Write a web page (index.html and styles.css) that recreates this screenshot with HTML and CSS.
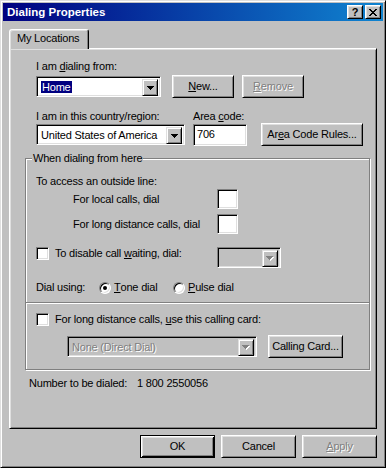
FILE: index.html
```html
<!DOCTYPE html>
<html lang="en">
<head>
  <meta charset="UTF-8">
  <title>Dialing Properties</title>
  <link rel="stylesheet" href="styles.css">
</head>
<body>
  <div class="window">
    <div class="titlebar">
      <span class="title">Dialing Properties</span>
      <div class="title-buttons">
        <button class="tbtn">?</button>
        <button class="tbtn">
          <svg width="8" height="7" viewBox="0 0 8 7"><path d="M0 0h2v1h1v1h2V1h1V0h2v1H7v1H6v1H5v1h1v1h1v1h1v1H6V6H5V5H3v1H2v1H0V6h1V5h1V4h1V3H2V2H1V1H0z" fill="#000"/></svg>
        </button>
      </div>
    </div>

    <div class="content">
      <div class="tabs">
        <div class="tab">My Locations</div>
      </div>

      <div class="panel">
        <div class="top">
          <div class="lbl">I am <u>d</u>ialing from:</div>
          <div class="row first">
            <div class="combo w-home">
              <span class="value"><span class="sel">Home</span></span>
              <span class="arrow"><svg width="7" height="4" viewBox="0 0 7 4"><path d="M0 0h7v1H6v1H5v1H4v1H3V3H2V2H1V1H0z"/></svg></span>
            </div>
            <button class="btn w-small"><u>N</u>ew...</button>
            <button class="btn w-small" disabled><u>R</u>emove</button>
          </div>
          <div class="row labels">
            <div class="lbl w-country-col">I am in this country/region:</div>
            <div class="lbl">Area <u>c</u>ode:</div>
          </div>
          <div class="row">
            <div class="combo w-country">
              <span class="value">United States of America</span>
              <span class="arrow"><svg width="7" height="4" viewBox="0 0 7 4"><path d="M0 0h7v1H6v1H5v1H4v1H3V3H2V2H1V1H0z"/></svg></span>
            </div>
            <div class="field w-area">706</div>
            <button class="btn w-rules">Ar<u>e</u>a Code Rules...</button>
          </div>
        </div>

        <fieldset class="group">
          <legend>When dialing from here</legend>
          <div class="group-top">
            <div class="lbl">To access an outside line:</div>
            <div class="dial-row">
              <span class="dial-lbl">For local calls, dial</span>
              <span class="field w-dial"></span>
            </div>
            <div class="dial-row second">
              <span class="dial-lbl">For long distance calls, dial</span>
              <span class="field w-dial"></span>
            </div>
            <div class="check-row waiting">
              <span class="check"></span>
              <span class="check-lbl w-wait-lbl">To disable call <u>w</u>aiting, dial:</span>
              <div class="combo disabled w-wait">
                <span class="value"></span>
                <span class="arrow"><svg width="8" height="5" viewBox="0 0 8 5"><path d="M1 1h7v1H7v1H6v1H5v1H4V4H3V3H2V2H1z" fill="#fff"/><path d="M0 0h7v1H6v1H5v1H4v1H3V3H2V2H1V1H0z" fill="#808080"/></svg></span>
              </div>
            </div>
            <div class="radio-row">
              <span class="w-dialusing">Dial using:</span>
              <span class="option w-tone"><span class="radio on"></span><u>T</u>one dial</span>
              <span class="option"><span class="radio"></span><u>P</u>ulse dial</span>
            </div>
          </div>
          <div class="group-bottom">
            <div class="check-row">
              <span class="check"></span>
              <span class="check-lbl">For long distance calls, <u>u</u>se this calling card:</span>
            </div>
            <div class="row card">
              <div class="combo disabled w-card">
                <span class="value">None (Direct Dial)</span>
                <span class="arrow"><svg width="8" height="5" viewBox="0 0 8 5"><path d="M1 1h7v1H7v1H6v1H5v1H4V4H3V3H2V2H1z" fill="#fff"/><path d="M0 0h7v1H6v1H5v1H4v1H3V3H2V2H1V1H0z" fill="#808080"/></svg></span>
              </div>
              <button class="btn w-card-btn">Calling Card...</button>
            </div>
          </div>
        </fieldset>

        <div class="number">
          <span class="w-number-lbl">Number to be dialed:</span>
          <span>1 800 2550056</span>
        </div>
      </div>

      <div class="actions">
        <button class="btn default w-action">OK</button>
        <button class="btn w-action">Cancel</button>
        <button class="btn w-action" disabled><u>A</u>pply</button>
      </div>
    </div>
  </div>
</body>
</html>
```

FILE: styles.css
```css
* {
  box-sizing: border-box;
}
body {
  margin: 0;
  background: #c0c0c0;
  font-family: "Liberation Sans", Arial, sans-serif;
  font-size: 11px;
  line-height: 13px;
  letter-spacing: -0.2px;
  color: #000;
}
u {
  text-underline-offset: 1px;
}
/* window frame */
.window {
  width: 386px;
  height: 468px;
  background: #c0c0c0;
  border: 1px solid;
  border-color: #dfdfdf #000 #000 #dfdfdf;
  box-shadow: inset 1px 1px #fff, inset -1px -1px #808080;
  padding: 2px;
}
.titlebar {
  height: 18px;
  display: flex;
  align-items: center;
  justify-content: space-between;
  padding: 0 2px 0 4px;
  background: linear-gradient(to right, #000080, #1084d0);
  color: #fff;
}
.title {
  font-weight: bold;
  font-size: 11.5px;
  letter-spacing: 0;
}
.title-buttons {
  display: flex;
  gap: 2px;
}
.tbtn {
  width: 16px;
  height: 14px;
  padding: 0;
  display: flex;
  align-items: center;
  justify-content: center;
  background: #c0c0c0;
  border: 1px solid;
  border-color: #fff #000 #000 #fff;
  box-shadow: inset 1px 1px #dfdfdf, inset -1px -1px #808080;
  font: bold 11px/11px "Liberation Sans", Arial, sans-serif;
  color: #000;
}
.content {
  padding: 8px 6px 0;
}
/* tab strip */
.tabs {
  display: flex;
  position: relative;
  z-index: 1;
  margin-bottom: -1px;
}
.tab {
  width: 80px;
  height: 20px;
  padding: 2px 0 0 7px;
  background: #c0c0c0;
  border: 1px solid;
  border-bottom: none;
  border-color: #fff #000 transparent #fff;
  border-radius: 3px 3px 0 0;
  box-shadow: inset 1px 1px #dfdfdf, inset -1px 0 #808080;
}
.panel {
  height: 381px;
  border: 1px solid;
  border-color: #fff #000 #000 #fff;
  box-shadow: inset 1px 1px #dfdfdf, inset -1px -1px #808080;
  padding: 11px 0 0 15px;
}
.top {
  padding-left: 11px;
}
.row {
  display: flex;
  align-items: center;
  height: 23px;
}
.row.first {
  margin-top: 2px;
}
.row.labels {
  margin-top: 12px;
  height: 13px;
  align-items: flex-start;
}
/* controls */
.combo {
  display: flex;
  height: 21px;
  padding: 2px;
  background: #fff;
  border: 1px solid;
  border-color: #808080 #fff #fff #808080;
  box-shadow: inset 1px 1px #000, inset -1px -1px #dfdfdf;
}
.combo .value {
  flex: 1;
  padding: 2px 0 0 2px;
  white-space: nowrap;
  overflow: hidden;
}
.combo .sel {
  background: #000080;
  color: #fff;
  padding: 0 1px;
}
.combo .arrow {
  width: 16px;
  height: 17px;
  flex: none;
  display: flex;
  align-items: center;
  justify-content: center;
  background: #c0c0c0;
  border: 1px solid;
  border-color: #dfdfdf #000 #000 #dfdfdf;
  box-shadow: inset 1px 1px #fff, inset -1px -1px #808080;
}
.combo.disabled {
  background: #c0c0c0;
}
.combo.disabled .value {
  color: #808080;
  text-shadow: 1px 1px 0 #fff;
}
.field {
  display: block;
  height: 21px;
  padding: 3px 0 0 3px;
  background: #fff;
  border: 1px solid;
  border-color: #808080 #fff #fff #808080;
  box-shadow: inset 1px 1px #000, inset -1px -1px #dfdfdf;
}
.btn {
  height: 23px;
  padding: 0;
  background: #c0c0c0;
  border: 1px solid;
  border-color: #fff #000 #000 #fff;
  box-shadow: inset 1px 1px #dfdfdf, inset -1px -1px #808080;
  font: inherit;
  letter-spacing: inherit;
  color: #000;
  flex: none;
}
.btn:disabled {
  color: #808080;
  text-shadow: 1px 1px 0 #fff;
}
.btn.default {
  border-color: #000;
  box-shadow: inset 1px 1px #fff, inset -1px -1px #000, inset 2px 2px #dfdfdf, inset -2px -2px #808080;
}
.check {
  width: 13px;
  height: 13px;
  flex: none;
  margin-right: 6px;
  background: #fff;
  border: 1px solid;
  border-color: #808080 #fff #fff #808080;
  box-shadow: inset 1px 1px #000, inset -1px -1px #dfdfdf;
}
.radio {
  width: 12px;
  height: 12px;
  flex: none;
  margin-right: 3px;
  display: flex;
  align-items: center;
  justify-content: center;
  border-radius: 50%;
  background: #fff;
  border: 1px solid;
  border-color: #808080 #fff #fff #808080;
  box-shadow: inset 1px 1px #000, inset -1px -1px #dfdfdf;
}
.radio.on::after {
  content: "";
  width: 4px;
  height: 4px;
  border-radius: 50%;
  background: #000;
}
/* widths */
.w-home { width: 125px; margin-right: 11px; }
.w-small { width: 62px; margin-right: 8px; }
.w-country-col { width: 157px; }
.w-country { width: 149px; margin-right: 8px; }
.w-area { width: 54px; height: 22px; margin-right: 14px; }
.w-rules { width: 102px; }
.w-dial { width: 21px; height: 20px; }
.w-wait-lbl { width: 162px; }
.w-wait { width: 64px; }
.w-dialusing { width: 63px; }
.w-tone { width: 74px; }
.w-card { width: 190px; margin-right: 11px; }
.w-card-btn { width: 75px; }
.w-number-lbl { width: 108px; }
.w-action { width: 75px; }
/* group box */
.group {
  width: 345px;
  margin: 6px 0 0;
  padding: 0;
  border: 1px solid #808080;
  box-shadow: inset 1px 1px #fff, 1px 1px #fff;
}
.group legend {
  margin-left: 6px;
  padding: 0 1px;
  background: #c0c0c0;
  line-height: 13px;
}
.group-top {
  padding: 10px 0 8px 10px;
}
.dial-row {
  display: flex;
  align-items: center;
  height: 20px;
  margin-top: 1px;
  padding-left: 37px;
}
.dial-row.second {
  margin-top: 5px;
}
.dial-lbl {
  width: 144px;
}
.check-row {
  display: flex;
  align-items: flex-start;
}
.check-row.waiting {
  margin-top: 13px;
}
.radio-row {
  display: flex;
  align-items: center;
  height: 13px;
  margin-top: 13px;
}
.option {
  display: flex;
  align-items: center;
}
.group-bottom {
  padding: 10px 0 11px 10px;
  border-top: 1px solid #808080;
  box-shadow: inset 0 1px #fff;
}
.row.card {
  margin-top: 9px;
  padding-left: 31px;
}
.number {
  display: flex;
  margin: 7px 0 0 4px;
}
.actions {
  display: flex;
  justify-content: flex-end;
  gap: 6px;
  margin-top: 6px;
}
```
